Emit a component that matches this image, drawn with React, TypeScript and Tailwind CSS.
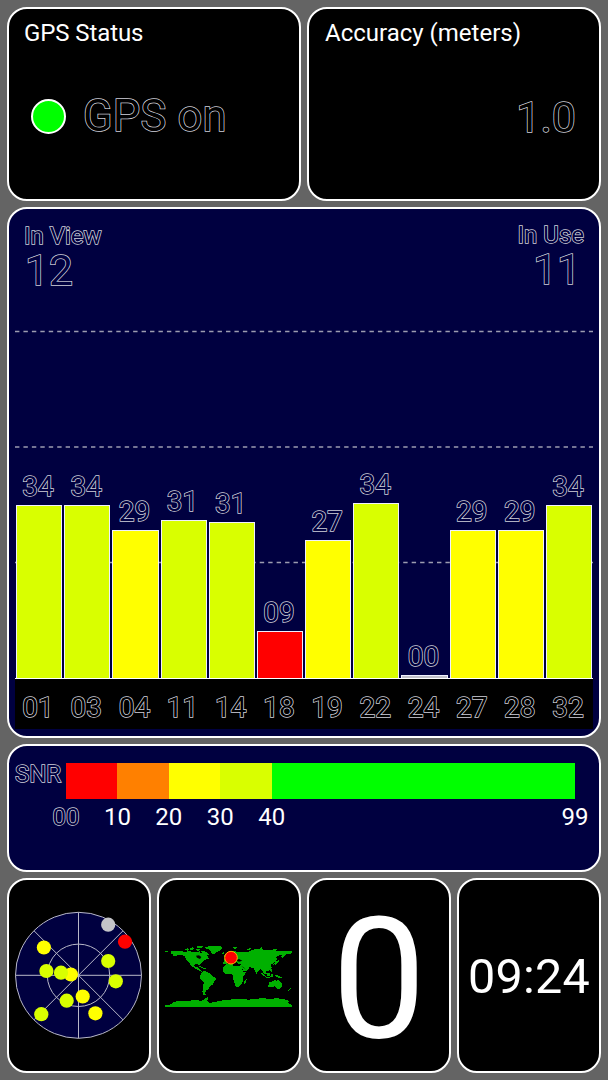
import React from 'react';
import clsx from 'clsx';

interface Satellite {
  prn: string;
  snr: string;
  height: number;
  color: string;
}

const satellites: Satellite[] = [
  { prn: '01', snr: '34', height: 173, color: 'bg-[#d9ff00]' },
  { prn: '03', snr: '34', height: 173, color: 'bg-[#d9ff00]' },
  { prn: '04', snr: '29', height: 148, color: 'bg-[#ffff00]' },
  { prn: '11', snr: '31', height: 158, color: 'bg-[#d9ff00]' },
  { prn: '14', snr: '31', height: 156, color: 'bg-[#d9ff00]' },
  { prn: '18', snr: '09', height: 47, color: 'bg-[#ff0000]' },
  { prn: '19', snr: '27', height: 138, color: 'bg-[#ffff00]' },
  { prn: '22', snr: '34', height: 175, color: 'bg-[#d9ff00]' },
  { prn: '24', snr: '00', height: 3, color: 'bg-[#c0c0c8]' },
  { prn: '27', snr: '29', height: 148, color: 'bg-[#ffff00]' },
  { prn: '28', snr: '29', height: 148, color: 'bg-[#ffff00]' },
  { prn: '32', snr: '34', height: 173, color: 'bg-[#d9ff00]' },
];

const snrLegend = [
  { label: '00', color: 'bg-[#ff0000]', grow: 10, outlined: true },
  { label: '10', color: 'bg-[#ff8000]', grow: 10 },
  { label: '20', color: 'bg-[#ffff00]', grow: 10 },
  { label: '30', color: 'bg-[#d9ff00]', grow: 10 },
  { label: '40', color: 'bg-[#00ff00]', grow: 59 },
];

const skyDots = [
  { x: 108.2, y: 924.7, color: '#c4c4c8' },
  { x: 125, y: 941.7, color: '#ff0000' },
  { x: 43.9, y: 947.5, color: '#ffff00' },
  { x: 108.2, y: 961, color: '#d9ff00' },
  { x: 46.4, y: 971, color: '#d9ff00' },
  { x: 70.9, y: 974.5, color: '#ffff00' },
  { x: 61, y: 972.7, color: '#d9ff00' },
  { x: 115.8, y: 981.3, color: '#d9ff00' },
  { x: 82.7, y: 996.5, color: '#ffff00' },
  { x: 66.7, y: 1000.7, color: '#d9ff00' },
  { x: 95.4, y: 1013.3, color: '#ffff00' },
  { x: 41.3, y: 1014.2, color: '#d9ff00' },
];

const landmasses = [
  // north america
  'M63 66L68 63L88 63L105 65L120 64L134 66L146 67L150 64L154 70L160 68L164 66L168 74L176 82L180 88L170 88L163 91L156 98L150 103L148 108L146 102L138 103L134 105L136 112L142 112L144 109L147 116L153 120L158 124L154 125L146 120L138 117L128 110L120 101L112 92L106 80L98 74L86 75L76 79L68 79L72 74L64 72Z',
  // arctic islands
  'M46 62L52 62L57 66L48 67Z M106 58L114 55L120 59L113 62Z M120 55L130 52L135 55L128 60L121 59Z M136 50L150 49L162 48L156 53L145 55Z M138 58L146 56L152 60L144 63Z M153 63L162 62L172 68L178 75L171 76L163 72L157 68Z',
  // greenland
  'M163 53L176 49L196 48L220 50L216 56L212 62L203 66L194 71L189 72L184 66L180 59L170 56Z',
  // caribbean
  'M146 109L154 109L160 113L154 113Z M161 114L168 115L166 118L161 117Z',
  // south america
  'M157 126L165 123L175 127L182 130L186 137L196 142L200 146L193 154L189 164L180 170L176 178L170 181L167 188L168 194L161 194L158 185L160 172L162 158L154 150L150 142L153 133Z',
  // europe and asia
  'M222 88L228 83L226 76L229 73L240 67L250 63L270 66L280 65L292 67L300 63L314 58L330 56L338 58L352 61L370 60L390 64L408 63L426 64L426 70L418 72L408 73L404 78L398 83L394 78L399 74L386 77L378 83L383 88L378 95L370 99L373 106L366 102L362 105L366 112L364 119L355 124L348 122L350 132L344 133L340 126L336 119L330 118L324 126L321 132L316 125L312 115L304 112L296 108L300 115L292 122L283 125L278 116L272 108L274 102L266 102L260 97L253 100L246 97L236 98L228 103L221 102Z',
  // islands off europe
  'M217 68L224 67L222 71L217 71Z M222 75L228 73L230 80L223 83Z M249 52L262 52L258 56L250 55Z M290 60L300 55L305 54L298 60Z M330 53L338 52L337 56L331 56Z M370 57L384 56L382 60L372 60Z',
  // africa
  'M227 104L238 102L248 102L251 107L260 107L272 108L276 115L281 125L290 126L284 136L279 142L280 152L276 161L269 170L260 172L255 161L251 150L251 139L246 132L232 133L224 129L219 120L221 111Z M286 150L291 148L289 158L284 163L282 156Z',
  // japan
  'M380 92L388 91L386 98L378 104L372 103Z',
  // south east asia
  'M334 129L340 131L350 139L348 141L342 138Z M348 141L360 142L358 145L349 144Z M350 130L358 127L363 132L359 138L352 137Z M359 113L365 117L368 125L364 126L359 119Z M364 132L371 134L368 142L362 140Z M376 134L385 136L397 142L395 146L386 143L377 139Z',
  // australia and new zealand
  'M357 157L368 154L375 150L382 152L386 148L391 155L398 162L397 170L391 177L382 176L375 169L364 171L356 172Z M388 179L393 179L390 182Z M420 172L425 177L420 180L414 186L414 182L420 178Z',
  // antarctica
  'M47 225L66 223L72 216L88 213L110 212L138 211L156 212L168 205L174 201L176 203L172 212L178 219L192 217L214 212L232 209L260 208L276 206L296 209L314 207L334 205L362 206L384 205L404 208L418 212L414 219L426 224L426 231L47 231Z',
];

interface TextProps {
  className?: string;
  children: React.ReactNode;
}

// The fill is painted over the stroke, so only the outer contour shows.
const Outlined: React.FC<TextProps> = ({ className, children }) => (
  <span
    className={clsx(
      'whitespace-nowrap leading-none [paint-order:stroke_fill] [-webkit-text-stroke:1.5px_#d0d0da]',
      className
    )}
  >
    {children}
  </span>
);

const Panel: React.FC<TextProps> = ({ className, children }) => (
  <section className={clsx('rounded-[20px] border-2 border-white', className)}>{children}</section>
);

const SignalChart: React.FC = () => (
  <div className="relative mx-[6px] mt-[38px]">
    <svg className="absolute top-0 left-0 h-[350px] w-full" viewBox="0 0 578 350">
      {[1.5, 117, 232.5].map((y) => (
        <line key={y} x1="0" x2="578" y1={y} y2={y} stroke="#9c9cb0" strokeWidth="1.3" strokeDasharray="4.4 4.04" />
      ))}
    </svg>
    <div className="relative flex h-[349px] items-end border-b border-white">
      {satellites.map((sat) => (
        <div key={sat.prn} className="flex flex-1 flex-col items-center px-px">
          <Outlined className="mb-[4px] -ml-[2px] text-[28px] text-[#000040]">{sat.snr}</Outlined>
          <div
            className={clsx('w-full border border-b-0 border-[#f0f0ff]', sat.color)}
            style={{ height: sat.height }}
          />
        </div>
      ))}
    </div>
    <div className="flex h-[50px] items-center bg-black pt-[8px]">
      {satellites.map((sat) => (
        <div key={sat.prn} className="flex flex-1 justify-center pr-[2px]">
          <Outlined className="text-[28px] text-black">{sat.prn}</Outlined>
        </div>
      ))}
    </div>
  </div>
);

const SkyPlot: React.FC = () => (
  <svg className="h-[130px] w-[130px]" viewBox="14 911 130 130">
    <g fill="none" stroke="#b8b8c8" strokeWidth="1">
      <circle cx="78.5" cy="975.3" r="63" fill="#000040" />
      <circle cx="78.5" cy="975.3" r="31.2" />
      <path d="M15.5 975.3H141.5M78.5 912.3V1038.3M34 930.8L123 1019.8M123 930.8L34 1019.8" />
    </g>
    {skyDots.map((dot) => (
      <circle key={`${dot.x}-${dot.y}`} cx={dot.x} cy={dot.y} r="7.1" fill={dot.color} />
    ))}
  </svg>
);

const WorldMap: React.FC = () => (
  <svg className="h-[62px] w-[128px]" viewBox="46 45 384 186">
    <g fill="#00b000" shapeRendering="crispEdges">
      {landmasses.map((d) => (
        <path key={d} d={d} />
      ))}
    </g>
    {/* inland seas */}
    <path d="M139 77L148 76L155 81L151 87L142 83Z M257 91L268 87L278 92L268 95Z M274 108L282 112L289 119L282 113Z" fill="#000" />
    <circle cx="244" cy="83" r="19" fill="#ff0000" stroke="#ffb000" strokeWidth="3" />
  </svg>
);

export default function App() {
  return (
    <main className="flex h-[1080px] w-[608px] flex-col gap-[6px] bg-[#646464] p-[7px] pb-[6px] font-['Roboto',sans-serif] text-white">
      <div className="flex h-[194px] gap-[6px]">
        <Panel className="flex-1 bg-black px-[15px] pt-[10px]">
          <h2 className="text-[24px] leading-[28px] tracking-[-0.1px]">GPS Status</h2>
          <div className="mt-[47px] flex items-center pl-[7px]">
            <span className="h-[35px] w-[35px] rounded-full border-2 border-white bg-[#00ff00]" />
            <Outlined className="mt-px ml-[17px] text-[43.5px] tracking-[0.2px] text-black">GPS on</Outlined>
          </div>
        </Panel>
        <Panel className="flex-1 bg-black px-[15px] pt-[10px]">
          <h2 className="pl-px text-[24px] leading-[28px]">Accuracy (meters)</h2>
          <div className="mt-[49px] flex justify-end pr-[8px]">
            <Outlined className="text-[43px] text-black">1.0</Outlined>
          </div>
        </Panel>
      </div>

      <Panel className="h-[531px] bg-[#000040] text-[#000040]">
        <div className="flex h-[83px] justify-between pr-[15px] pl-[15px]">
          <div className="flex flex-col pt-[15px]">
            <Outlined className="text-[24px]">In View</Outlined>
            <Outlined className="mt-[2px] ml-px text-[42.5px]">12</Outlined>
          </div>
          <div className="flex flex-col items-end pt-[14px]">
            <Outlined className="text-[24px]">In Use</Outlined>
            <Outlined className="mt-[2px] mr-[3px] text-[42.5px]">11</Outlined>
          </div>
        </div>
        <SignalChart />
      </Panel>

      <Panel className="h-[128px] bg-[#000040] pt-[17px]">
        <div className="flex pl-[6px]">
          <Outlined className="-mt-px w-[51px] text-[24px] text-[#000040]">SNR</Outlined>
          <div className="flex w-[509px]">
            {snrLegend.map((band) => (
              <div key={band.label} className="basis-0" style={{ flexGrow: band.grow }}>
                <div className={clsx('h-9', band.color)} />
                <div className="mt-[6px] -ml-[20px] w-10 text-center text-[24px] leading-none">
                  {band.outlined ? <Outlined className="text-[#000040]">{band.label}</Outlined> : band.label}
                </div>
              </div>
            ))}
          </div>
          <div className="mt-[42px] -ml-[20px] w-10 text-center text-[24px] leading-none">99</div>
        </div>
      </Panel>

      <div className="flex h-[195px] gap-[6px]">
        <Panel className="flex flex-1 items-center justify-center bg-black">
          <SkyPlot />
        </Panel>
        <Panel className="flex flex-1 items-center justify-center bg-black">
          <WorldMap />
        </Panel>
        <Panel className="flex flex-1 items-center justify-center bg-black">
          <span className="pt-[8px] text-[168px] leading-none">0</span>
        </Panel>
        <Panel className="flex flex-1 items-center justify-center bg-black">
          <span className="pt-[3px] text-[48.5px] leading-none tracking-[0.2px]">09:24</span>
        </Panel>
      </div>
    </main>
  );
}
